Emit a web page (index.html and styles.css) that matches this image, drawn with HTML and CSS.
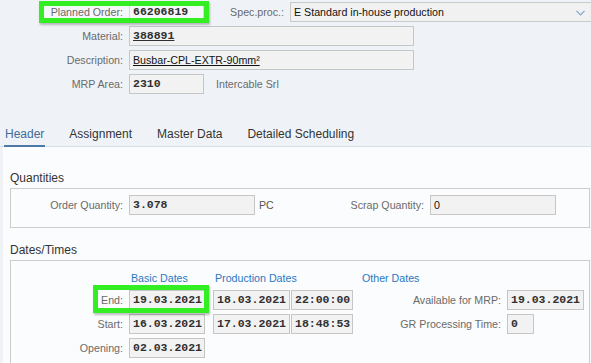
FILE: index.html
```html
<!DOCTYPE html>
<html>
<head>
<meta charset="utf-8">
<link rel="stylesheet" href="styles.css">
</head>
<body>
<div class="top">
  <div class="row">
    <div class="hl">
      <span class="lbl">Planned Order:</span>
      <span class="fld mono w75 soft">66206819</span>
    </div>
    <span class="lbl lbl-spec">Spec.proc.:</span>
    <div class="select">
      <span>E Standard in-house production</span>
      <svg class="chev" width="9" height="6" viewBox="0 0 9 6"><polyline points="0.5,0.8 4.5,4.8 8.5,0.8" fill="none" stroke="#7fa6cc" stroke-width="1.2"/></svg>
    </div>
  </div>
  <div class="row"><span class="lbl">Material:</span><span class="fld mono u w285">388891</span></div>
  <div class="row"><span class="lbl">Description:</span><span class="fld sans u w285">Busbar-CPL-EXTR-90mm²</span></div>
  <div class="row"><span class="lbl">MRP Area:</span><span class="fld mono w75">2310</span><span class="note">Intercable Srl</span></div>
</div>

<div class="tabs">
  <span class="tab active">Header</span>
  <span class="tab">Assignment</span>
  <span class="tab">Master Data</span>
  <span class="tab">Detailed Scheduling</span>
</div>

<div class="content">
  <div class="h">Quantities</div>
  <div class="box qty">
    <span class="lbl c1">Order Quantity:</span>
    <span class="fld mono w126">3.078</span>
    <span class="unit">PC</span>
    <span class="lbl c-scrap">Scrap Quantity:</span>
    <span class="fld sans w126">0</span>
  </div>

  <div class="h h2">Dates/Times</div>
  <div class="box dates">
    <span></span>
    <span class="colh pl2">Basic Dates</span>
    <span class="colh pl2 span2">Production Dates</span>
    <span class="colh pl9">Other Dates</span>
    <span></span>

    <span class="lbl end">End:</span>
    <span class="fld mono w76">19.03.2021</span>
    <span class="fld mono w77">18.03.2021</span>
    <span class="fld mono w62">22:00:00</span>
    <span class="lbl">Available for MRP:</span>
    <span class="fld mono w77">19.03.2021</span>

    <span class="lbl">Start:</span>
    <span class="fld mono w76">16.03.2021</span>
    <span class="fld mono w77">17.03.2021</span>
    <span class="fld mono w62">18:48:53</span>
    <span class="lbl">GR Processing Time:</span>
    <span class="fld mono w27">0</span>

    <span class="lbl">Opening:</span>
    <span class="fld mono w76">02.03.2021</span>
    <span></span><span></span><span></span><span></span>
  </div>
</div>
</body>
</html>
```

FILE: styles.css
```css
html, body {
  margin: 0;
  padding: 0;
}
body {
  width: 591px;
  height: 363px;
  overflow: hidden;
  background: #eff3f7;
  font-family: "Liberation Sans", Arial, sans-serif;
  font-size: 10.67px;
  color: #333;
}

.top {
  padding-top: 2px;
  padding-bottom: 1px;
}
.row {
  display: flex;
  align-items: center;
  height: 20px;
  margin-bottom: 4px;
}
.row:last-child {
  margin-bottom: 0;
}
.lbl {
  box-sizing: border-box;
  width: 129px;
  flex: none;
  padding-right: 6px;
  text-align: right;
  color: #6a6a6a;
  white-space: nowrap;
}
.lbl-spec {
  width: 86px;
}
.fld {
  box-sizing: border-box;
  flex: none;
  height: 20px;
  line-height: 18px;
  border: 1px solid #c6c6c6;
  background: #f2f2f2;
  padding-left: 3px;
  color: #303030;
  white-space: nowrap;
  overflow: hidden;
}
.mono {
  font-family: "Liberation Mono", "Courier New", monospace;
  font-size: 11.5px;
  font-weight: bold;
}
.sans {
  font-family: "Liberation Sans", Arial, sans-serif;
  font-size: 10.67px;
  color: #111;
}
.u {
  text-decoration: underline;
}
.soft {
  background: #f6f7f8;
  border-color: #dadada;
}
.w27 { width: 27px; }
.w62 { width: 62px; }
.w75 { width: 75px; }
.w76 { width: 76px; }
.w77 { width: 77px; }
.w126 { width: 126px; }
.w285 { width: 285px; }

.note {
  margin-left: 12px;
  color: #6a6a6a;
}

/* highlight annotations */
.hl {
  position: relative;
  isolation: isolate;
  display: flex;
  align-items: center;
  height: 20px;
}
.hl::before,
.hl::after {
  content: "";
  position: absolute;
  left: 39px;
  top: -1px;
  width: 170px;
  height: 22px;
  box-sizing: border-box;
}
.hl::before {
  z-index: -1;
  background: #f6f7f9;
}
.hl::after {
  z-index: 1;
  border: 5px solid #33ee22;
  box-shadow: 1px 2px 2px rgba(0, 0, 0, 0.25);
}

.select {
  box-sizing: border-box;
  flex: 1;
  margin-right: -6px;
  height: 20px;
  display: flex;
  align-items: center;
  justify-content: space-between;
  border: 1px solid #c9c9c9;
  background: #f1f1f1;
  padding-left: 3px;
  padding-right: 11px;
  font-size: 10.67px;
  color: #111;
}
.chev {
  display: block;
  margin-top: 1px;
}

/* tabs */
.tabs {
  display: flex;
  gap: 23px;
  padding-left: 4px;
  margin-top: 26px;
  border-bottom: 1px solid #d3e0ec;
}
.tab {
  font-size: 12px;
  line-height: 16px;
  padding: 5px 1px 3px;
  border-bottom: 2px solid transparent;
  margin-bottom: -1px;
  color: #333;
}
.tab.active {
  color: #3e6b98;
  border-bottom-color: #4d79a6;
}

/* content */
.content {
  margin-left: 3px;
  background: #fbfcfd;
  padding: 23px 1px 0 7px;
}
.h {
  font-size: 12px;
  line-height: 16px;
  color: #333;
  margin-bottom: 2px;
}
.h2 {
  margin-top: 14px;
}
.box {
  border: 1px solid #cccccc;
}
.qty {
  display: flex;
  align-items: center;
  padding: 6px 0 12px;
}
.c1 {
  width: 118px;
}
.unit {
  box-sizing: border-box;
  width: 44px;
  padding-left: 4px;
  color: #555;
}
.c-scrap {
  width: 131px;
}

.dates {
  display: grid;
  grid-template-columns: 118px 84px 78px 62px 154px 1fr;
  grid-auto-rows: 20px;
  grid-template-rows: 16px;
  row-gap: 4px;
  align-items: center;
  padding: 9px 0 10px;
}
.dates .lbl {
  width: auto;
  height: 20px;
  line-height: 20px;
}
.colh {
  color: #2a78c2;
  font-size: 10.67px;
  line-height: 16px;
  white-space: nowrap;
}
.pl2 { padding-left: 2px; }
.pl9 { padding-left: 9px; }
.span2 { grid-column: span 2; }

.end {
  position: relative;
}
.end::after {
  content: "";
  position: absolute;
  left: 82px;
  top: -5px;
  width: 116px;
  height: 28px;
  box-sizing: border-box;
  border: 5px solid #33ee22;
  box-shadow: 1px 2px 2px rgba(0, 0, 0, 0.25);
  z-index: 1;
}
```
